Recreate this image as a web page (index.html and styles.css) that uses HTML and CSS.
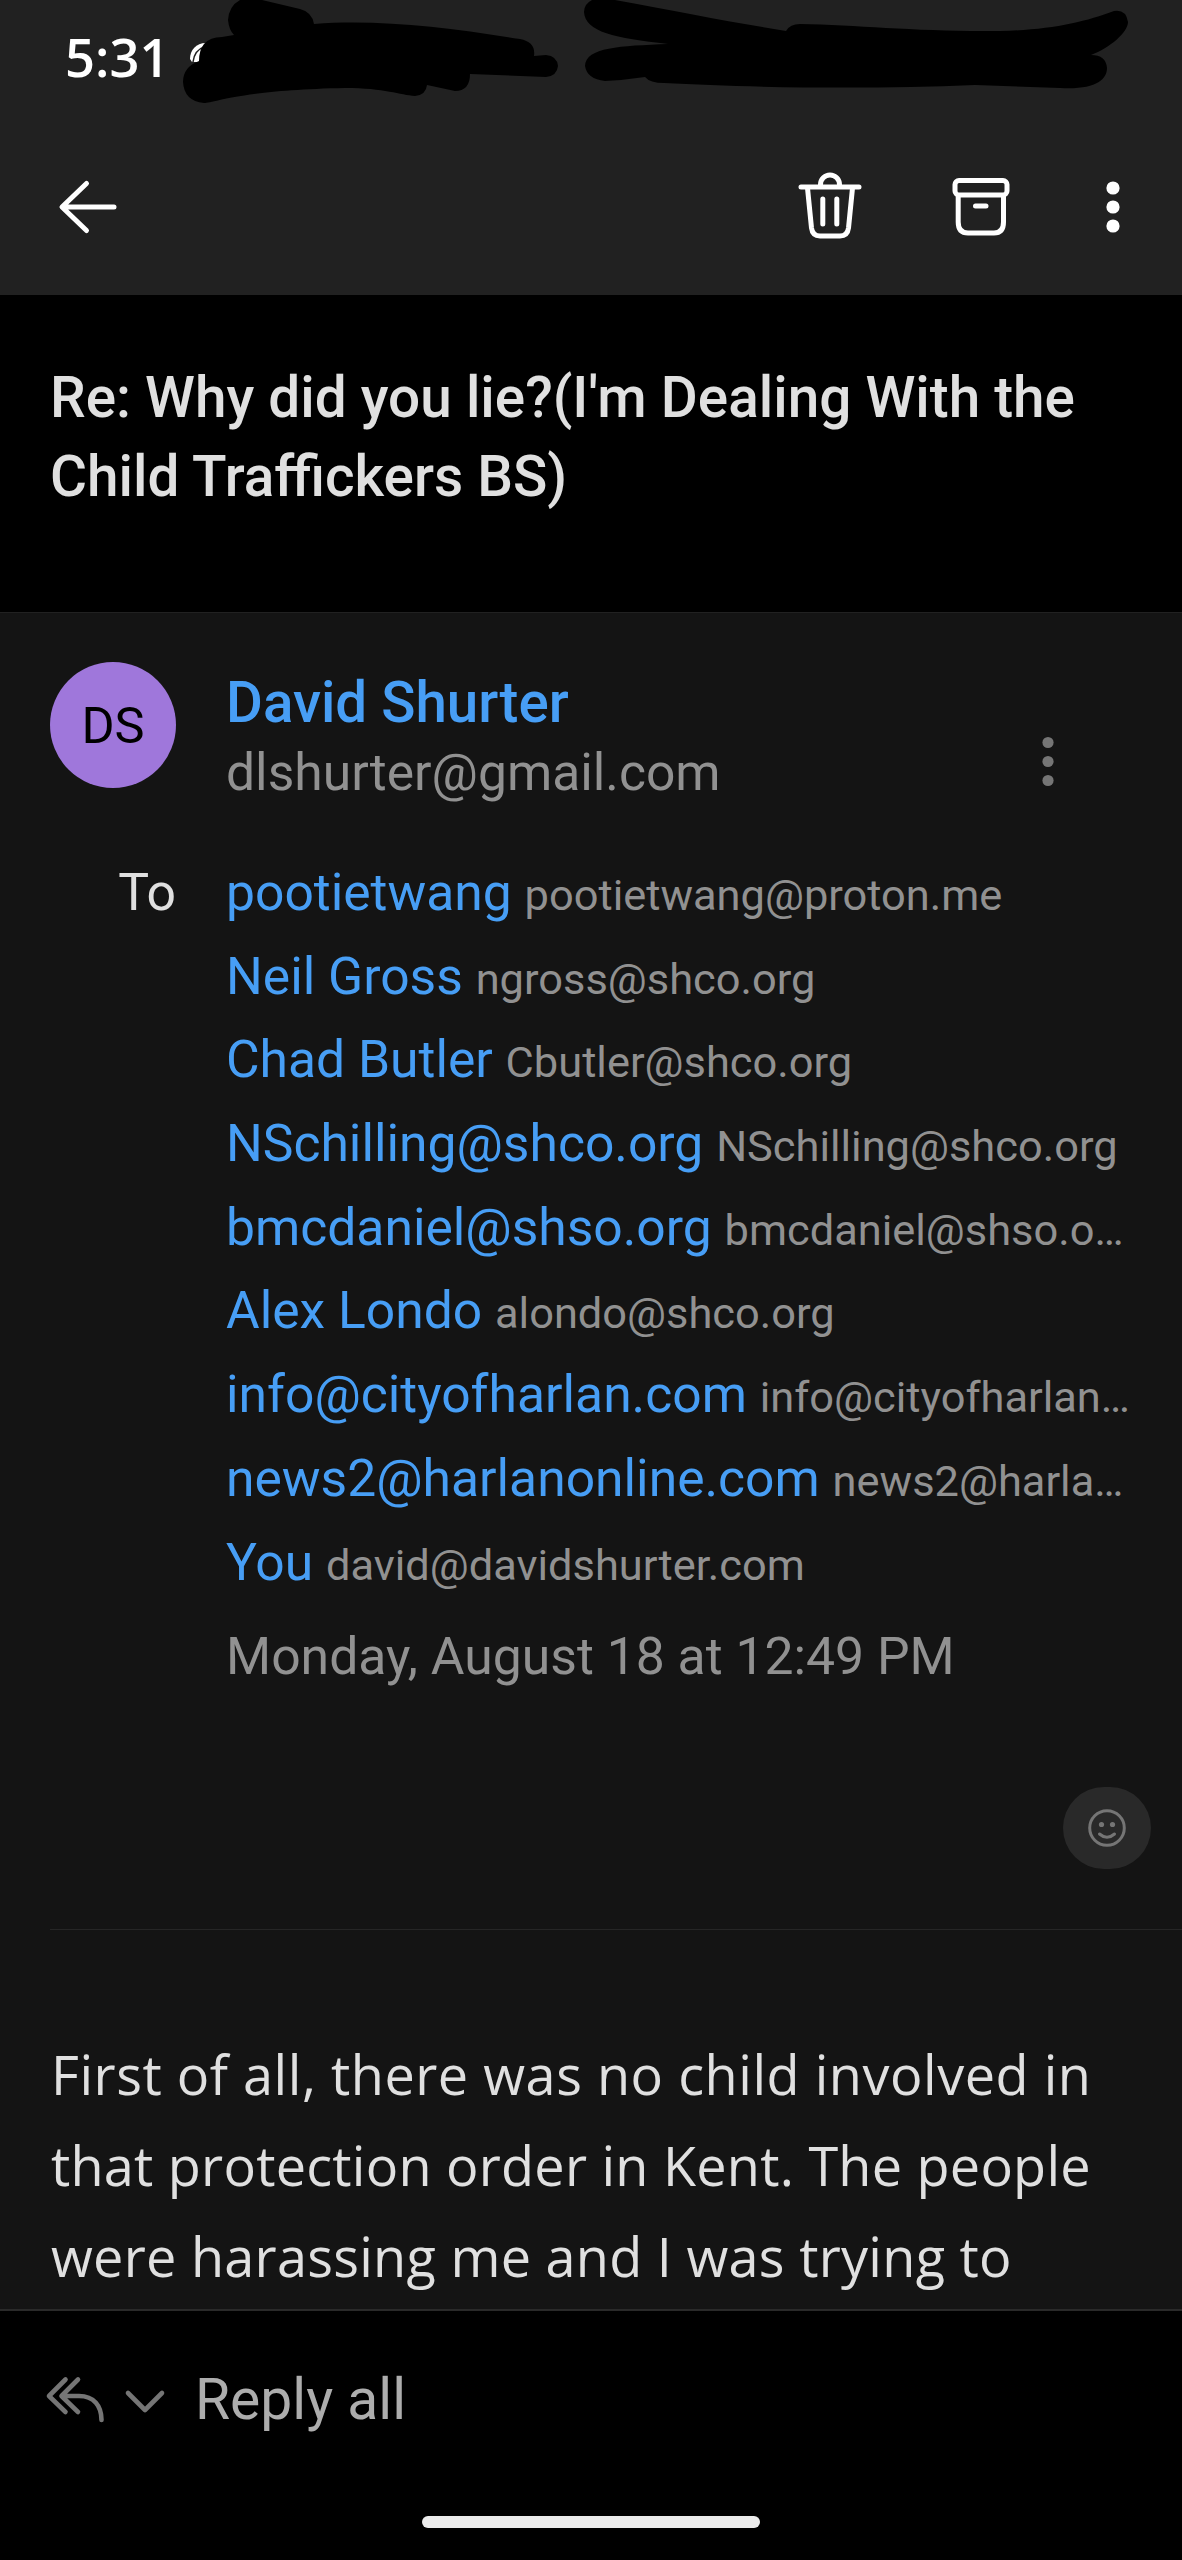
FILE: index.html
```html
<!DOCTYPE html>
<html lang="en">
<head>
<meta charset="utf-8">
<title>Mail</title>
<link rel="stylesheet" href="styles.css">
</head>
<body>
<div class="screen">
  <header class="top">
    <div class="status">
      <span class="time">5:31</span>
      <svg class="scribble" width="1182" height="116" viewBox="0 0 1182 116">
        <path fill="#fff" d="M206 43C196 43 190 50 190 59L192 62H199L207 56Z"/>
        <path fill="none" stroke="#212121" stroke-width="1.5" d="M204 47C198 49 194 54 193 62"/>
        <path d="M240 0Q229 6 228 20Q229 30 234 35L222 37Q210 37 204 44Q199 50 199 61Q183 67 183 82Q184 101 204 103C214 103 240 90 345 88C385 88 400 95 415 96Q426 95 427 85L455 91Q470 91 470 74L546 77Q557 76 558 66Q557 56 546 55L534 56Q536 42 520 39C450 28 380 19 314 24Q312 12 300 9L262 0Z"/>
        <path d="M592 0Q584 4 584 12C585 32 615 38 668 44C620 46 586 47 585 66Q587 79 605 81Q625 80 645 77Q650 83 664 83C740 87 860 90 975 85L1060 88C1095 90 1107 80 1107 68Q1106 55 1091 55C1110 48 1128 32 1128 22Q1126 9 1114 11C1085 22 1050 30 1000 31C920 32 860 25 800 24Q790 24 786 31C730 22 680 12 615 0Z"/>
      </svg>
    </div>
    <div class="toolbar">
      <svg class="icon back" width="80" height="80" viewBox="48 167 80 80"><path d="M86.500 183.500L62 207L86.500 230.500M63 207H114"/></svg>
      <svg class="icon" width="80" height="80" viewBox="790 167 80 80"><path d="M801 187H859M820.500 186V184.500a9.500 9.500 0 0 1 19 0V186M807.500 188L811.500 228Q812.500 236 820 236H840Q847.500 236 848.500 228L852.500 188M822.800 199V224M836.800 199V224"/></svg>
      <svg class="icon archive" width="80" height="80" viewBox="941 167 80 80"><rect x="955" y="180.500" width="52" height="14.500" rx="4"/><path d="M958.200 196V222Q958.200 233 968 233H994Q1003.500 233 1003.500 222V196M975.500 206H986"/></svg>
      <svg class="dots" width="40" height="80" viewBox="1093 167 40 80"><circle cx="1113" cy="188" r="6.600"/><circle cx="1113" cy="207" r="6.600"/><circle cx="1113" cy="226" r="6.600"/></svg>
    </div>
  </header>

  <h1 class="subject">Re: Why did you lie?(I'm Dealing With the<br>Child Traffickers BS)</h1>

  <main class="message">
    <section class="meta">
      <div class="avatar">DS</div>
      <div class="sender">
        <div class="who">
          <div class="name">David Shurter</div>
          <div class="address">dlshurter@gmail.com</div>
        </div>
        <svg class="more" width="40" height="60" viewBox="1028 732 40 60"><circle cx="1048" cy="742.500" r="5.600"/><circle cx="1048" cy="761.500" r="5.600"/><circle cx="1048" cy="780.500" r="5.600"/></svg>
      </div>
      <div class="to">To</div>
      <div class="recipients">
        <div class="row">pootietwang <span class="mail">pootietwang@proton.me</span></div>
        <div class="row">Neil Gross <span class="mail">ngross@shco.org</span></div>
        <div class="row">Chad Butler <span class="mail">Cbutler@shco.org</span></div>
        <div class="row">NSchilling@shco.org <span class="mail">NSchilling@shco.org</span></div>
        <div class="row">bmcdaniel@shso.org <span class="mail">bmcdaniel@shso.o…</span></div>
        <div class="row">Alex Londo <span class="mail">alondo@shco.org</span></div>
        <div class="row">info@cityofharlan.com <span class="mail">info@cityofharlan…</span></div>
        <div class="row">news2@harlanonline.com <span class="mail">news2@harla…</span></div>
        <div class="row">You <span class="mail">david@davidshurter.com</span></div>
        <div class="date">Monday, August 18 at 12:49 PM</div>
      </div>
    </section>
    <div class="react">
      <svg width="44" height="44" viewBox="-22 -22 44 44"><circle r="17.300" fill="none" stroke="#757575" stroke-width="3"/><circle cx="-5.500" cy="-3.500" r="2.600" fill="#757575"/><circle cx="5.500" cy="-3.500" r="2.600" fill="#757575"/><path d="M-7.500 6Q0 12.500 7.500 6" fill="none" stroke="#757575" stroke-width="3" stroke-linecap="round"/></svg>
    </div>
    <div class="rule"></div>
    <p class="body"><span class="l1">First of all, there was no child involved in</span><br><span class="l2">that protection order in Kent. The people</span><br><span class="l3">were harassing me and I was trying to</span></p>
  </main>

  <footer class="reply">
    <div class="action">
      <svg class="gray" width="70" height="56" viewBox="40 2370 70 56"><path d="M65.500 2377.500L49 2394L65.500 2410M78 2377.500L61.500 2394L78 2410M62.500 2394H79C94 2394 101.500 2404 101.500 2418"/></svg>
      <svg class="gray chevron" width="50" height="56" viewBox="120 2370 50 56"><path d="M128 2391L145 2408L162 2391"/></svg>
      <span class="label">Reply all</span>
    </div>
    <div class="home"></div>
  </footer>
</div>
</body>
</html>
```
FILE: styles.css
```css
* { box-sizing: border-box; margin: 0; padding: 0; }
body { background: #000; font-family: Roboto, sans-serif; color: #e0e0e0; }
svg { display: block; flex: none; }
.screen { width: 1182px; height: 2560px; display: flex; flex-direction: column; overflow: hidden; }

.top { height: 295px; background: #212121; flex: none; }
.status { position: relative; height: 116px; padding-left: 65px; }
.time { font: 600 52.500px/114px "Open Sans", sans-serif; color: #fff; display: block; }
.scribble { position: absolute; left: 0; top: 0; }
.toolbar { display: flex; padding: 51px 49px 0 48px; }
.icon { fill: none; stroke: #fff; stroke-width: 5; stroke-linecap: round; stroke-linejoin: round; }
.back { margin-right: auto; }
.archive { margin: 0 72px 0 71px; }
.dots { fill: #fff; }

.subject { height: 317px; flex: none; padding: 64px 50px 0; font-size: 56.700px; line-height: 78.500px; font-weight: 500; white-space: nowrap; }

.message { flex: 1; min-height: 0; overflow: hidden; background: #141414; border-top: 1px solid #212121; border-bottom: 2px solid #2a2a2a; }
.meta { display: grid; grid-template-columns: 126px 1fr; column-gap: 50px; padding: 49px 0 0 50px; }
.avatar { width: 126px; height: 126px; border-radius: 50%; background: #9f77db; color: #000; font-size: 50.500px; line-height: 127px; text-align: center; }
.sender { display: flex; justify-content: space-between; padding: 6px 114px 46px 0; }
.name { font-size: 56.500px; line-height: 70px; font-weight: 500; color: #479ef5; }
.address { font-size: 51.600px; line-height: 64px; margin-top: 3px; color: #919191; }
.more { fill: #757575; margin-top: 64px; }
.to { font-size: 51.700px; line-height: 83.700px; text-align: right; }
.row { font-size: 51.600px; line-height: 83.700px; height: 83.700px; color: #479ef5; white-space: nowrap; }
.mail { font-size: 43.400px; line-height: 1; color: #919191; }
.date { font-size: 51.700px; line-height: 70px; margin-top: 18px; color: #919191; }
.react { width: 88px; height: 82px; margin: 95px 31px 0 auto; border-radius: 41px; background: #292929; display: flex; align-items: center; justify-content: center; }
.rule { height: 1px; margin: 60px 0 0 50px; background: #262626; }
.body { padding: 99px 0 0 51px; font: 450 54px/90.700px "Open Sans", sans-serif; white-space: nowrap; }
.l1 { letter-spacing: .53px; }
.l2 { letter-spacing: .24px; }
.l3 { letter-spacing: .27px; }

.reply { height: 249px; flex: none; display: flex; flex-direction: column; align-items: center; padding-top: 59px; }
.action { align-self: stretch; display: flex; align-items: center; padding-left: 40px; height: 60px; }
.gray { fill: none; stroke: #757575; stroke-width: 4.600; stroke-linecap: round; stroke-linejoin: round; }
.chevron { margin-left: 10px; }
.label { margin-left: 25px; font-size: 57px; line-height: 60px; color: #adadad; }
.home { width: 338px; height: 12px; margin-top: 86px; border-radius: 6px; background: #ececec; }
```
